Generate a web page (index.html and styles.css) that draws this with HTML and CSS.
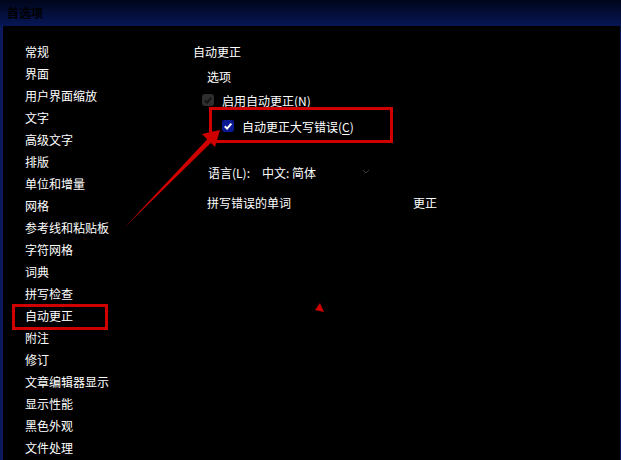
FILE: index.html
```html
<!DOCTYPE html>
<html lang="zh-CN">
<head>
    <meta charset="UTF-8">
    <meta name="viewport" content="width=device-width, initial-scale=1.0">
    <title>首选项</title>
    <link rel="stylesheet" href="styles.css">
</head>
<body>
    <div class="window">
        <div class="titlebar">首选项</div>

        <div class="content">
            <ul class="nav">
                <li>常规</li>
                <li>界面</li>
                <li>用户界面缩放</li>
                <li>文字</li>
                <li>高级文字</li>
                <li>排版</li>
                <li>单位和增量</li>
                <li>网格</li>
                <li>参考线和粘贴板</li>
                <li>字符网格</li>
                <li>词典</li>
                <li>拼写检查</li>
                <li class="active marked">自动更正</li>
                <li>附注</li>
                <li>修订</li>
                <li>文章编辑器显示</li>
                <li>显示性能</li>
                <li>黑色外观</li>
                <li>文件处理</li>
            </ul>

            <div class="panel">
                <div class="panel-title">自动更正</div>
                <div class="group-title">选项</div>

                <div class="check-row disabled">
                    <svg class="box" width="12" height="12" viewBox="0 0 12 12">
                        <rect x="0" y="0" width="12" height="12" rx="3" fill="#2e2e2e"/>
                        <path d="M2.8 6.3 L5.1 8.6 L9.3 3.6" fill="none" stroke="#141414" stroke-width="2"/>
                    </svg>
                    <span>启用自动更正(<u>N</u>)</span>
                </div>

                <div class="check-row checked marked">
                    <svg class="box" width="12" height="12" viewBox="0 0 12 12">
                        <rect x="0" y="0" width="12" height="12" rx="3" fill="#0b1a94"/>
                        <path d="M2.8 6.3 L5.1 8.6 L9.3 3.6" fill="none" stroke="#ffffff" stroke-width="2"/>
                    </svg>
                    <span>自动更正大写错误(<u>C</u>)</span>
                </div>

                <div class="lang-row">
                    <span class="lang-label">语言(L):</span>
                    <span class="lang-value">中文: 简体</span>
                    <svg class="chevron" width="8" height="5" viewBox="0 0 8 5">
                        <path d="M1 1 L4 4 L7 1" fill="none" stroke="#3a3a3a" stroke-width="1"/>
                    </svg>
                </div>

                <div class="table-head">
                    <span class="col-word">拼写错误的单词</span>
                    <span>更正</span>
                </div>
            </div>
        </div>

        <!-- 标注箭头 -->
        <svg class="annotations" width="621" height="460" viewBox="0 0 621 460">
            <polygon points="125,227 212,141.8 208.2,138.2" fill="#d00000"/>
            <polygon points="220,130 202,134 215,147" fill="#d00000"/>
            <polygon points="320,303 315,310 324,312" fill="#d00000"/>
        </svg>
    </div>
</body>
</html>
```

FILE: styles.css
```css
body {
    margin: 0;
    background-color: #000;
    font-family: "Noto Sans CJK SC", "Noto Sans", sans-serif;
    font-size: 12px;
    color: #fff;
}
.window {
    position: relative;
    width: 621px;
    height: 460px;
    overflow: hidden;
    background-color: #000;
}
.titlebar {
    height: 26px;
    line-height: 26px;
    padding-left: 7px;
    background: linear-gradient(to bottom, #00051a, #071756);
    color: #000;
    font-weight: bold;
    font-size: 12px;
}
.content {
    display: flex;
    height: 434px;
    border-left: 3px solid #0a1a5c;
    border-right: 1px solid #071650;
}
.nav {
    list-style: none;
    margin: 0;
    padding: 15px 0 0 22px;
    width: 168px;
}
.nav li {
    line-height: 22px;
    height: 22px;
    white-space: nowrap;
}
.marked {
    position: relative;
}
.nav li.marked::after {
    content: "";
    position: absolute;
    left: -13px;
    top: 2px;
    width: 96px;
    height: 26px;
    box-sizing: border-box;
    border: 3px solid #d00000;
    transform: translateY(-3px);
}
.panel {
    flex: 1;
    padding-top: 15px;
}
.panel-title {
    line-height: 22px;
}
.group-title {
    line-height: 22px;
    margin-top: 3px;
    padding-left: 14px;
}
.check-row {
    display: flex;
    align-items: center;
    gap: 8px;
    height: 22px;
    white-space: nowrap;
}
.check-row.disabled {
    margin-top: 1px;
    padding-left: 9px;
}
.check-row.checked {
    margin-top: 4px;
    padding-left: 29px;
}
.check-row.marked::after {
    content: "";
    position: absolute;
    left: 16px;
    top: -8px;
    width: 184px;
    height: 36px;
    box-sizing: border-box;
    border: 3px solid #d00000;
}
.check-row u {
    text-underline-offset: 2px;
}
.lang-row {
    display: flex;
    align-items: center;
    height: 22px;
    margin-top: 24px;
    padding-left: 15px;
}
.lang-label {
    width: 54px;
}
.lang-value {
    width: 100px;
}
.chevron {
    margin-top: -2px;
}
.table-head {
    display: flex;
    height: 22px;
    line-height: 22px;
    margin-top: 9px;
    padding-left: 14px;
}
.col-word {
    width: 206px;
}
.annotations {
    position: absolute;
    left: 0;
    top: 0;
    pointer-events: none;
}
```
